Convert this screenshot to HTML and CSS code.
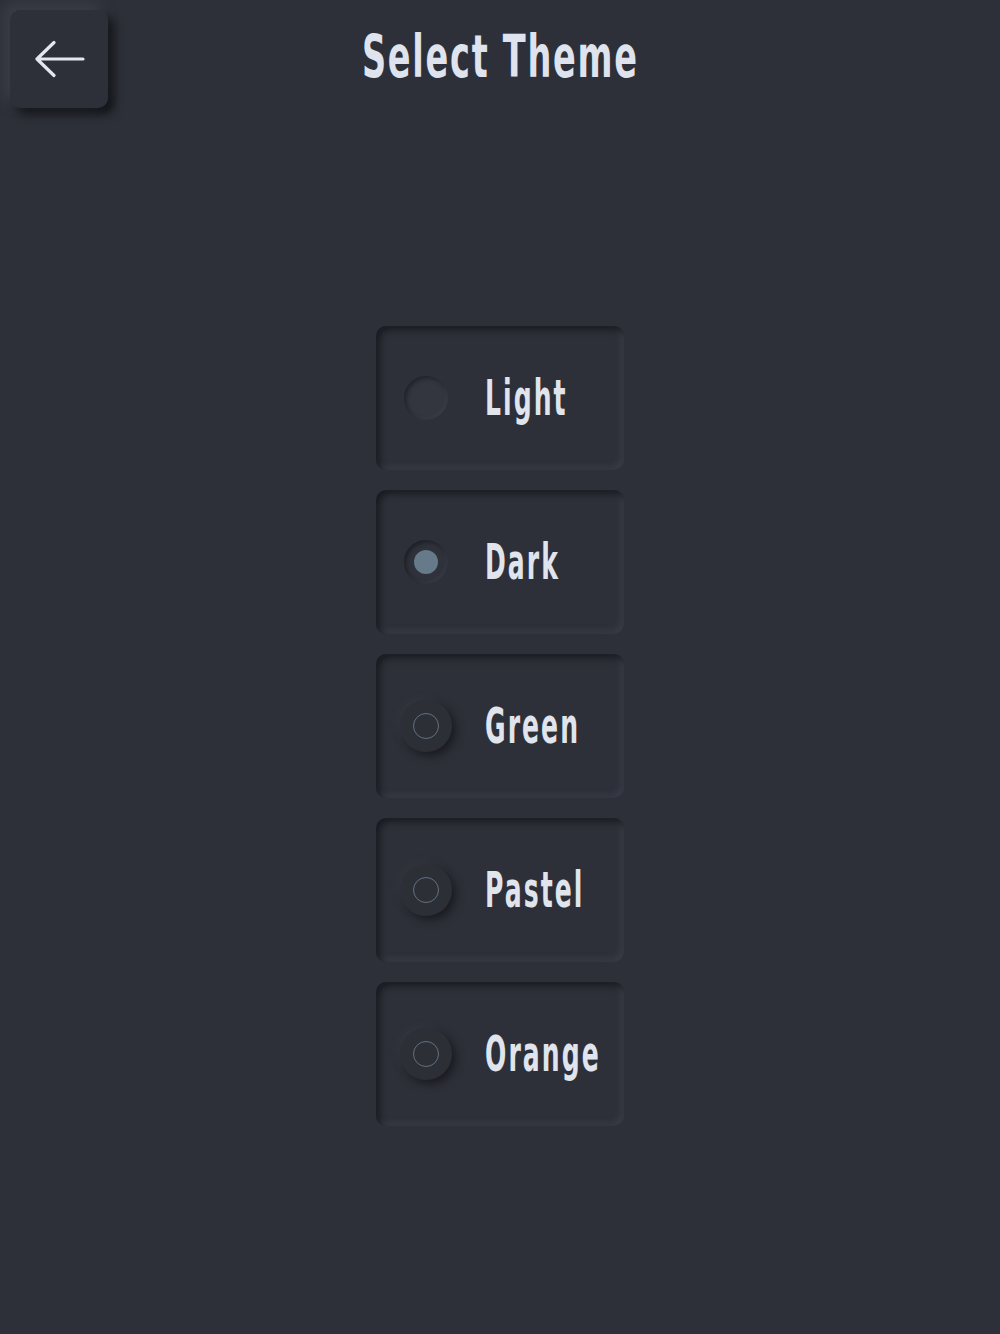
FILE: index.html
```html
<!DOCTYPE html>
<html>
<head>
<meta charset="utf-8">
<link rel="stylesheet" href="styles.css">
</head>
<body>
<div class="screen">
  <header class="header">
    <button class="back" aria-label="Back">
      <svg width="50" height="40" viewBox="0 0 50 40"><path d="M48 20 H2 M19 3.5 L2 20 L19 36.5" fill="none" stroke="#e4e7ef" stroke-width="3.2" stroke-linecap="round" stroke-linejoin="round"/></svg>
    </button>
    <h1 class="title">Select Theme</h1>
  </header>
  <main class="list">
    <div class="card"><span class="radio radio-plain"></span><span class="label">Light</span></div>
    <div class="card"><span class="radio radio-selected"><span class="dot"></span></span><span class="label">Dark</span></div>
    <div class="card"><span class="radio radio-raised"><span class="ring"></span></span><span class="label">Green</span></div>
    <div class="card"><span class="radio radio-raised"><span class="ring"></span></span><span class="label">Pastel</span></div>
    <div class="card"><span class="radio radio-raised"><span class="ring"></span></span><span class="label">Orange</span></div>
  </main>
</div>
</body>
</html>
```
FILE: styles.css
```css
html, body {
  margin: 0;
  padding: 0;
  background: #2e3039;
}
.screen {
  width: 1000px;
  height: 1334px;
  background: #2e3039;
  font-family: "DejaVu Sans", sans-serif;
  color: #e0e4ec;
  position: relative;
}
.header {
  height: 118px;
  display: flex;
  align-items: center;
  justify-content: center;
  position: relative;
}
.back {
  position: absolute;
  left: 10px;
  top: 10px;
  width: 98px;
  height: 98px;
  border: none;
  border-radius: 10px;
  background: #2e3039;
  box-shadow: -6px -6px 14px rgba(70, 74, 86, 0.55), 6px 6px 10px rgba(14, 15, 20, 0.85);
  display: flex;
  align-items: center;
  justify-content: center;
  padding: 0 0 1px 2px;
}
.title {
  margin: 0;
  font-size: 58px;
  font-weight: 700;
  letter-spacing: 3px;
  color: #dfe3ee;
  line-height: 1;
  transform: translate(0, -2px) scaleX(0.578);
  white-space: nowrap;
}
.list {
  margin-top: 208px;
  display: flex;
  flex-direction: column;
  align-items: center;
  gap: 20px;
}
.card {
  width: 248px;
  height: 144px;
  box-sizing: border-box;
  border-radius: 10px;
  background: #2e3039;
  box-shadow: inset 4px 4px 6px rgba(18, 19, 24, 0.7), inset -3px -3px 6px rgba(72, 76, 88, 0.45);
  display: flex;
  align-items: center;
  padding-left: 28px;
}
.radio {
  width: 44px;
  height: 44px;
  border-radius: 50%;
  display: flex;
  align-items: center;
  justify-content: center;
  flex: none;
  background: #2f323b;
}
.radio-plain {
  background: #33363f;
  box-shadow: inset 2px 2px 4px rgba(16, 17, 22, 0.55), inset -2px -2px 3px rgba(70, 74, 86, 0.35);
}
.radio-selected {
  box-shadow: inset 2px 2px 4px rgba(16, 17, 22, 0.6), inset -2px -2px 3px rgba(70, 74, 86, 0.35);
}
.dot {
  width: 24px;
  height: 24px;
  border-radius: 50%;
  background: #667a89;
}
.radio-raised {
  width: 52px;
  height: 52px;
  margin-left: -4px;
  margin-right: -4px;
  background: #2d2f37;
  box-shadow: 4px 4px 8px rgba(18, 19, 24, 0.7), -3px -3px 6px rgba(64, 68, 80, 0.3);
}
.ring {
  width: 24px;
  height: 24px;
  border-radius: 50%;
  border: 1.5px solid #5f7282;
}
.label {
  margin-left: 37px;
  font-size: 49px;
  font-weight: 700;
  letter-spacing: 4px;
  color: #e0e4ec;
  line-height: 1;
  display: inline-block;
  transform: scaleX(0.512);
  transform-origin: left center;
  white-space: nowrap;
}
```
